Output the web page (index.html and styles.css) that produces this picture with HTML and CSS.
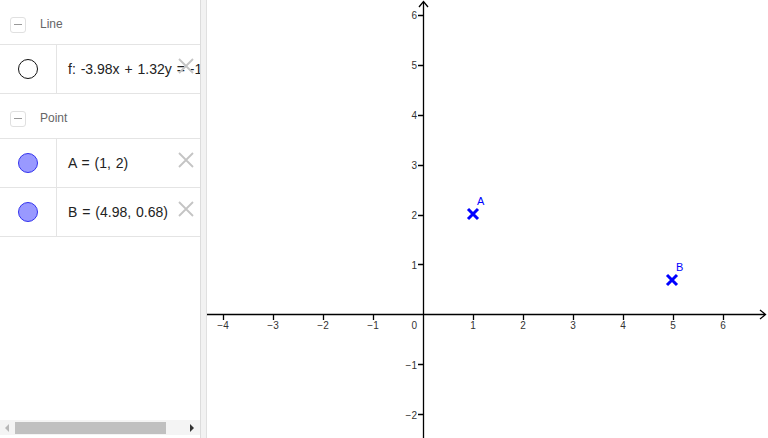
FILE: index.html
```html
<!DOCTYPE html>
<html>
<head>
<meta charset="utf-8">
<link rel="stylesheet" href="styles.css">
</head>
<body>
<div class="app">
  <div class="algebra">
    <div class="list">
      <div class="group">
        <span class="toggle"><span class="dash"></span></span>
        <span class="gname">Line</span>
      </div>
      <div class="row">
        <div class="marker"><span class="dot dot-line"></span></div>
        <div class="expr">f: -3.98x + 1.32y = -1</div>
        <svg class="del" viewBox="0 0 16 16"><path d="M1 1L15 15M15 1L1 15"/></svg>
      </div>
      <div class="group">
        <span class="toggle"><span class="dash"></span></span>
        <span class="gname">Point</span>
      </div>
      <div class="row">
        <div class="marker"><span class="dot dot-pt"></span></div>
        <div class="expr">A = (1, 2)</div>
        <svg class="del" viewBox="0 0 16 16"><path d="M1 1L15 15M15 1L1 15"/></svg>
      </div>
      <div class="row">
        <div class="marker"><span class="dot dot-pt"></span></div>
        <div class="expr">B = (4.98, 0.68)</div>
        <svg class="del" viewBox="0 0 16 16"><path d="M1 1L15 15M15 1L1 15"/></svg>
      </div>
    </div>
    <div class="hscroll">
      <svg class="arr" viewBox="0 0 8 10"><path d="M6 1L2 5L6 9Z" fill="#b8b8b8"/></svg>
      <div class="track"><div class="thumb"></div></div>
      <svg class="arr" viewBox="0 0 8 10"><path d="M2 1L6 5L2 9Z" fill="#333"/></svg>
    </div>
  </div>
  <div class="split"></div>
  <div class="graphics">
    <svg class="plot" width="561" height="438" viewBox="0 0 561 438">
      <g stroke="#000" stroke-width="1.3" fill="none">
        <path d="M0 314.5H558"/>
        <path d="M553 310L558.5 314.5L553 319"/>
        <path d="M216.5 438V2"/>
        <path d="M212 7L216.5 1.5L221 7"/>
        <path d="M16.5 314V320M66.5 314V320M116.5 314V320M166.5 314V320M266.5 314V320M316.5 314V320M366.5 314V320M416.5 314V320M466.5 314V320M516.5 314V320"/>
        <path d="M211 15.5H216M211 65.5H216M211 115.5H216M211 165.5H216M211 215.5H216M211 264.5H216M211 364.5H216M211 414.5H216"/>
      </g>
      <g class="tick" text-anchor="middle">
        <text x="16" y="329">−4</text>
        <text x="66" y="329">−3</text>
        <text x="116" y="329">−2</text>
        <text x="166" y="329">−1</text>
        <text x="266" y="329">1</text>
        <text x="316" y="329">2</text>
        <text x="366" y="329">3</text>
        <text x="416" y="329">4</text>
        <text x="466" y="329">5</text>
        <text x="516" y="329">6</text>
      </g>
      <g class="tick" text-anchor="end">
        <text x="210" y="329">0</text>
        <text x="210" y="19">6</text>
        <text x="210" y="69">5</text>
        <text x="210" y="119">4</text>
        <text x="210" y="169">3</text>
        <text x="210" y="219">2</text>
        <text x="210" y="269">1</text>
        <text x="210" y="369">−1</text>
        <text x="210" y="419">−2</text>
      </g>
      <g stroke="#0000ff" stroke-width="3" fill="none">
        <path d="M261 209L271 219M271 209L261 219"/>
        <path d="M460 275L470 285M470 275L460 285"/>
      </g>
      <g class="plabel">
        <text x="270" y="205">A</text>
        <text x="469" y="271">B</text>
      </g>
    </svg>
  </div>
</div>
</body>
</html>
```
FILE: styles.css
```css
* { box-sizing: border-box; }
html, body { margin: 0; padding: 0; }
body {
  width: 768px;
  height: 438px;
  overflow: hidden;
  background: #fff;
  font-family: "Liberation Sans", Arial, sans-serif;
}
.app {
  display: flex;
  width: 768px;
  height: 438px;
}
.algebra {
  width: 200px;
  flex: none;
  display: flex;
  flex-direction: column;
  overflow: hidden;
  background: #fff;
}
.list {
  flex: 1;
  overflow: hidden;
}
.group {
  height: 45px;
  display: flex;
  align-items: center;
  padding-left: 10px;
  padding-top: 3px;
  border-bottom: 1px solid #e4e4e4;
}
.toggle {
  width: 16px;
  height: 16px;
  border: 1px solid #e0e0e0;
  border-radius: 3px;
  display: flex;
  align-items: center;
  justify-content: center;
  margin-top: 2px;
}
.dash {
  width: 8px;
  height: 1px;
  background: #999;
}
.gname {
  margin-left: 14px;
  font-size: 12px;
  color: #666;
}
.row {
  height: 49px;
  display: flex;
  align-items: center;
  border-bottom: 1px solid #e4e4e4;
  position: relative;
}
.marker {
  width: 57px;
  height: 100%;
  flex: none;
  display: flex;
  align-items: center;
  justify-content: center;
  border-right: 1px solid #e4e4e4;
}
.dot {
  width: 20px;
  height: 20px;
  border-radius: 50%;
  display: block;
}
.dot-line {
  border: 1px solid #111;
  background: #fff;
}
.dot-pt {
  border: 1px solid #3333ee;
  background: #9999ff;
}
.expr {
  padding-left: 11px;
  font-size: 14px;
  color: #222;
  white-space: nowrap;
  word-spacing: 1px;
}
.del {
  position: absolute;
  left: 178px;
  top: 13px;
  width: 16px;
  height: 16px;
  stroke: #c4c4c4;
  stroke-width: 1.8;
  fill: none;
}
.hscroll {
  height: 15px;
  margin-bottom: 3px;
  display: flex;
  align-items: center;
  background: #f4f4f4;
  padding: 0 4px 0 3px;
}
.arr {
  width: 8px;
  height: 10px;
  flex: none;
}
.track {
  flex: 1;
  height: 12px;
  margin: 0 4px;
}
.thumb {
  width: 151px;
  height: 12px;
  background: #c0c0c0;
}
.split {
  width: 7px;
  flex: none;
  background: #f2f2f2;
  border-left: 1px solid #dcdcdc;
  border-right: 1px solid #e0e0e0;
}
.graphics {
  flex: 1;
  overflow: hidden;
  background: #fff;
}
.plot { display: block; }
.tick {
  font-family: "Liberation Sans", Arial, sans-serif;
  font-size: 10px;
  fill: #333;
}
.plabel {
  font-family: "Liberation Sans", Arial, sans-serif;
  font-size: 11px;
  fill: #0000ff;
}
```
